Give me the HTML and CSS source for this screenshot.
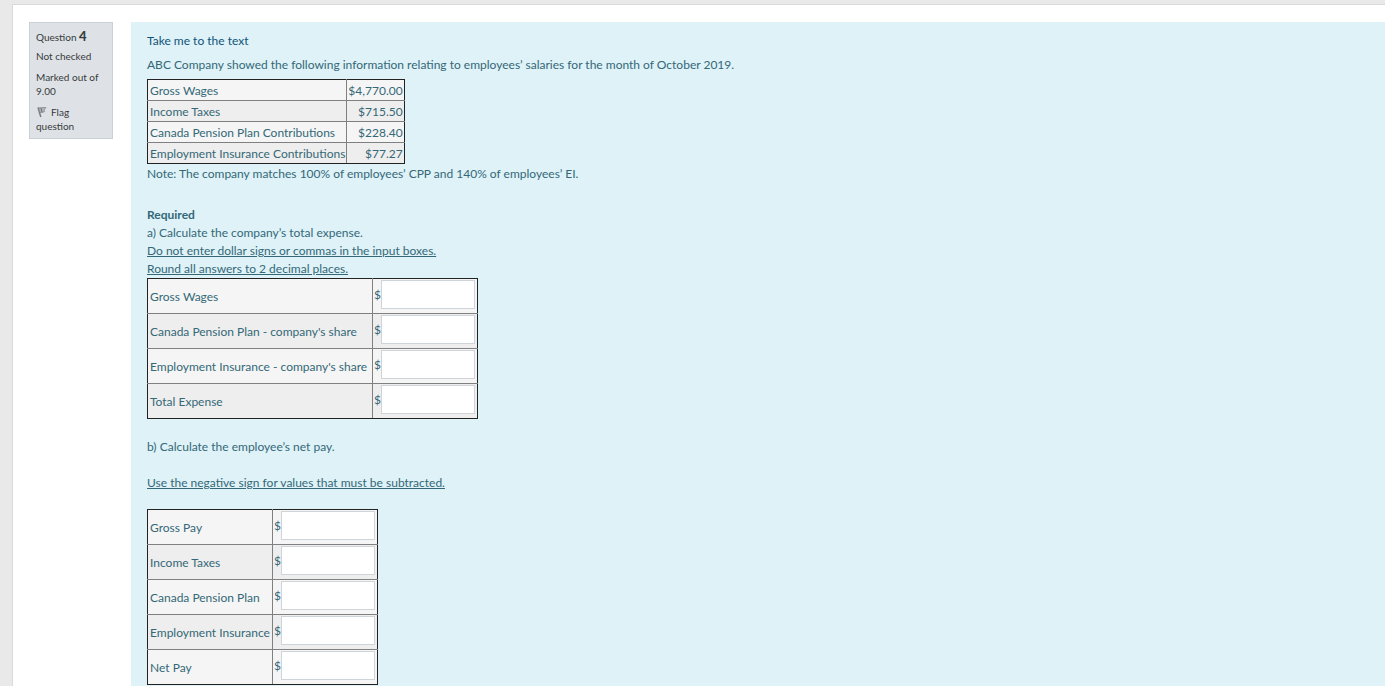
FILE: index.html
```html
<!DOCTYPE html>
<html lang="en">
<head>
<meta charset="utf-8">
<title>Question 4</title>
<link rel="stylesheet" href="styles.css">
</head>
<body>
<main class="page">
  <aside class="info">
    <h3 class="number">Question <b>4</b></h3>
    <p class="state">Not checked</p>
    <p class="grade">Marked out of 9.00</p>
    <button class="flag" type="button"><svg class="flag-icon" viewBox="0 0 12 12" aria-hidden="true"><path d="M2 1.5L4.8 11" stroke="#777" stroke-width="1.4" fill="none"/><path d="M2.6 1.8L10 1.6L8.2 3.6L8.4 5.8L5.8 6.4L4 6.6Z" fill="#b4b7ba" stroke="#85878a" stroke-width=".8"/><path d="M5 2.2L6 6.2" stroke="#666" stroke-width=".9"/></svg>Flag question</button>
  </aside>
  <section class="content">
    <p class="intro"><a class="text-link" href="#">Take me to the text</a></p>
    <p class="lead">ABC Company showed the following information relating to employees’ salaries for the month of October 2019.</p>
    <table class="grid facts">
      <tr><td>Gross Wages</td><td class="amount">$4,770.00</td></tr>
      <tr><td>Income Taxes</td><td class="amount">$715.50</td></tr>
      <tr><td>Canada Pension Plan Contributions</td><td class="amount">$228.40</td></tr>
      <tr><td>Employment Insurance Contributions</td><td class="amount">$77.27</td></tr>
    </table>
    <p class="note">Note: The company matches 100% of employees’ CPP and 140% of employees’ EI.</p>
    <div class="required">
      <p><strong>Required</strong></p>
      <p>a) Calculate the company’s total expense.</p>
      <p><u>Do not enter dollar signs or commas in the input boxes.</u></p>
      <p><u>Round all answers to 2 decimal places.</u></p>
    </div>
    <table class="grid answers expense">
      <tr><td><label for="a1">Gross Wages</label></td><td><div class="entry">$<input id="a1" type="text"></div></td></tr>
      <tr><td><label for="a2">Canada Pension Plan - company's share</label></td><td><div class="entry">$<input id="a2" type="text"></div></td></tr>
      <tr><td><label for="a3">Employment Insurance - company's share</label></td><td><div class="entry">$<input id="a3" type="text"></div></td></tr>
      <tr><td><label for="a4">Total Expense</label></td><td><div class="entry">$<input id="a4" type="text"></div></td></tr>
    </table>
    <p class="part">b) Calculate the employee’s net pay.</p>
    <p class="hint"><u>Use the negative sign for values that must be subtracted.</u></p>
    <table class="grid answers netpay">
      <tr><td><label for="b1">Gross Pay</label></td><td><div class="entry">$<input id="b1" type="text"></div></td></tr>
      <tr><td><label for="b2">Income Taxes</label></td><td><div class="entry">$<input id="b2" type="text"></div></td></tr>
      <tr><td><label for="b3">Canada Pension Plan</label></td><td><div class="entry">$<input id="b3" type="text"></div></td></tr>
      <tr><td><label for="b4">Employment Insurance</label></td><td><div class="entry">$<input id="b4" type="text"></div></td></tr>
      <tr><td><label for="b5">Net Pay</label></td><td><div class="entry">$<input id="b5" type="text"></div></td></tr>
    </table>
  </section>
</main>
</body>
</html>
```
FILE: styles.css
```css
* { box-sizing: border-box; }
body {
  margin: 0;
  padding: 4px 0 0 12px;
  background: #e9e9e9;
  color: #346877;
  font: 12px/18px Lato, "Open Sans", sans-serif;
}
p, h3 { margin: 0; }
.page {
  display: flex;
  align-items: flex-start;
  gap: 18px;
  min-height: calc(100vh - 4px);
  padding: 17px 0 0 16px;
  background: #fff;
  border: 1px solid #dadada;
  border-width: 1px 0 0 1px;
}
.info {
  flex: none;
  width: 84px;
  padding: 4px 6px 5px;
  background: #dee2e6;
  border: 1px solid #cad0d7;
  color: #373a3c;
  font-size: 10px;
  line-height: 14px;
}
.number { font-size: 10px; font-weight: 400; line-height: 18px; }
.number b { font-size: 13px; font-weight: 900; }
.state { margin-top: 3px; }
.grade, .flag { margin-top: 7px; }
.flag {
  display: block;
  width: 100%;
  padding: 0;
  border: 0;
  background: none;
  color: inherit;
  font: inherit;
  text-align: left;
}
.flag-icon { width: 12px; height: 12px; margin-right: 3px; vertical-align: -2px; }
.content {
  flex: 1;
  min-height: calc(100vh - 22px);
  padding: 10px 16px 0;
  background: #def2f8;
}
.text-link { color: #0f5478; text-decoration: none; }
.lead { margin: 6px 0 5px; }
.grid {
  border-collapse: collapse;
  border: 1px solid #222;
  background: #f5f5f5;
}
.grid tr:nth-child(even) { background: #eee; }
.grid td { padding: 2px 1px 0 2px; border: 1px solid #808080; white-space: nowrap; }
.grid tr:first-child td { border-top-color: #222; }
.grid tr:last-child td { border-bottom-color: #222; }
.grid td:first-child { border-left-color: #222; }
.grid td:last-child { border-right-color: #222; }
.facts { width: 257px; }
.facts td { height: 21px; }
.facts .amount { width: 54px; padding-left: 1px; text-align: right; }
.note { margin: 1px 0 23px; }
.answers td { height: 35px; }
.answers td:last-child { width: 105px; padding: 1px 2px 1px 1px; vertical-align: top; }
.expense { width: 331px; }
.netpay { width: 231px; }
.entry { display: flex; align-items: center; justify-content: flex-end; }
.entry input {
  width: 94px;
  height: 29px;
  padding: 4px;
  border: 1px solid #ced4da;
  background: #fff;
  color: inherit;
  font: inherit;
}
.part { margin: 19px 0 18px; }
.hint { margin-bottom: 17px; }
```
